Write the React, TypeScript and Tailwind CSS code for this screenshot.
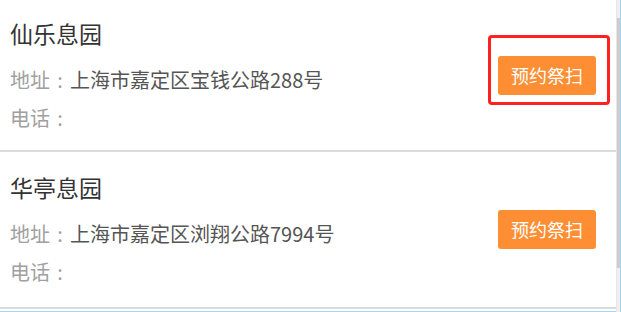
// Cemetery list with "预约祭扫" booking buttons

interface Cemetery {
  name: string
  address: string
  phone: string
  pad: string
  marked: boolean
}

const cemeteries: Cemetery[] = [
  { name: '仙乐息园', address: '上海市嘉定区宝钱公路288号', phone: '', pad: 'pt-[13px] pb-[13px]', marked: true },
  { name: '华亭息园', address: '上海市嘉定区浏翔公路7994号', phone: '', pad: 'pt-[15px] pb-[16px]', marked: false },
]

function BookButton({ marked }: { marked: boolean }) {
  return (
    <div className="relative">
      {marked && (
        <div className="absolute left-[-10px] top-[-21px] w-[122px] h-[70px] border-[3px] border-[#ff2020] rounded-[4px]"></div>
      )}
      <button className="relative w-[98px] h-[39px] rounded-[3px] bg-[#fd8e33] text-white text-[18px] leading-[39px]">
        预约祭扫
      </button>
    </div>
  )
}

function Label({ text }: { text: string }) {
  return (
    <span className="text-[#a0a0a0]">
      {text}
      <span className="inline-block w-[20px] text-center">:</span>
    </span>
  )
}

function CemeteryRow({ item }: { item: Cemetery }) {
  return (
    <div className={`flex items-center justify-between pl-[10px] pr-[20px] border-b-2 border-[#dcdcdc] ${item.pad}`}>
      <div>
        <div className="text-[23px] leading-[40px] text-[#333]">{item.name}</div>
        <div className="mt-[8px] text-[20px] leading-[38px] whitespace-nowrap">
          <Label text="地址" />
          <span className="text-[#555]">{item.address}</span>
        </div>
        <div className="text-[20px] leading-[38px]">
          <Label text="电话" />
          <span className="text-[#555]">{item.phone}</span>
        </div>
      </div>
      <BookButton marked={item.marked} />
    </div>
  )
}

export default function App() {
  return (
    <div
      className="w-[621px] h-[312px] bg-white flex overflow-hidden"
      style={{ fontFamily: '"Noto Sans CJK SC", "Noto Sans", sans-serif' }}
    >
      <div className="w-[616px] h-[312px] flex flex-col border-b border-[#a9d3ee]">
        {cemeteries.map((c) => (
          <CemeteryRow key={c.name} item={c} />
        ))}
      </div>
      <div className="w-[4px] h-[312px] flex flex-col border-l border-[#e6e6e6] bg-[#f0f0f0]">
        <div className="h-[18px]"></div>
        <div className="h-[250px] bg-[#cdcdcd]"></div>
      </div>
      <div className="w-[1px] h-[312px] bg-[#a9d3ee]"></div>
    </div>
  )
}
